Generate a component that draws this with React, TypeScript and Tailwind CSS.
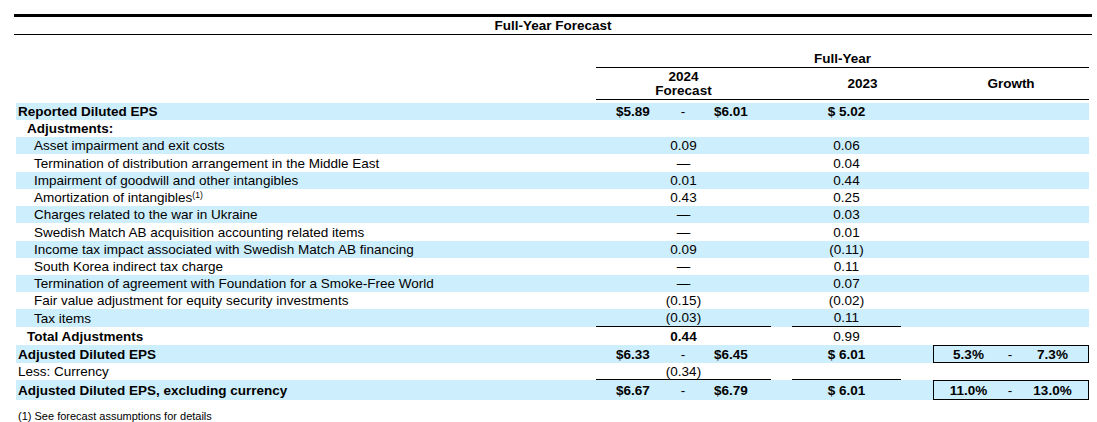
type Row = {
  label: string;
  sup?: string;
  pad: string;
  h: string;
  bold?: boolean;
  blue?: boolean;
  lo?: string;
  hi?: string;
  fc?: string;
  fcBold?: boolean;
  prior?: string;
  priorBold?: boolean;
  rule?: boolean;
  growth?: [string, string];
};

const rows: Row[] = [
  { label: 'Reported Diluted EPS', pad: 'pl-[2px]', h: 'h-[17px]', bold: true, blue: true, lo: '$5.89', hi: '$6.01', prior: '$ 5.02', priorBold: true },
  { label: 'Adjustments:', pad: 'pl-[11px]', h: 'h-[17px]', bold: true },
  { label: 'Asset impairment and exit costs', pad: 'pl-[18px]', h: 'h-[17px]', blue: true, fc: '0.09', prior: '0.06' },
  { label: 'Termination of distribution arrangement in the Middle East', pad: 'pl-[18px]', h: 'h-[18px]', fc: '—', prior: '0.04' },
  { label: 'Impairment of goodwill and other intangibles', pad: 'pl-[18px]', h: 'h-[17px]', blue: true, fc: '0.01', prior: '0.44' },
  { label: 'Amortization of intangibles', sup: '(1)', pad: 'pl-[18px]', h: 'h-[17px]', fc: '0.43', prior: '0.25' },
  { label: 'Charges related to the war in Ukraine', pad: 'pl-[18px]', h: 'h-[17px]', blue: true, fc: '—', prior: '0.03' },
  { label: 'Swedish Match AB acquisition accounting related items', pad: 'pl-[18px]', h: 'h-[18px]', fc: '—', prior: '0.01' },
  { label: 'Income tax impact associated with Swedish Match AB financing', pad: 'pl-[18px]', h: 'h-[17px]', blue: true, fc: '0.09', prior: '(0.11)' },
  { label: 'South Korea indirect tax charge', pad: 'pl-[18px]', h: 'h-[17px]', fc: '—', prior: '0.11' },
  { label: 'Termination of agreement with Foundation for a Smoke-Free World', pad: 'pl-[18px]', h: 'h-[17px]', blue: true, fc: '—', prior: '0.07' },
  { label: 'Fair value adjustment for equity security investments', pad: 'pl-[18px]', h: 'h-[17px]', fc: '(0.15)', prior: '(0.02)' },
  { label: 'Tax items', pad: 'pl-[18px]', h: 'h-[18px]', blue: true, fc: '(0.03)', prior: '0.11', rule: true },
  { label: 'Total Adjustments', pad: 'pl-[11px]', h: 'h-[18px]', bold: true, fc: '0.44', fcBold: true, prior: '0.99' },
  { label: 'Adjusted Diluted EPS', pad: 'pl-[2px]', h: 'h-[18px]', bold: true, blue: true, lo: '$6.33', hi: '$6.45', prior: '$ 6.01', priorBold: true, growth: ['5.3%', '7.3%'] },
  { label: 'Less: Currency', pad: 'pl-[2px]', h: 'h-[17px]', fc: '(0.34)', rule: true },
  { label: 'Adjusted Diluted EPS, excluding currency', pad: 'pl-[2px]', h: 'h-[20px]', bold: true, blue: true, lo: '$6.67', hi: '$6.79', prior: '$ 6.01', priorBold: true, growth: ['11.0%', '13.0%'] },
];

function ForecastCell({ r }: { r: Row }) {
  if (r.lo) {
    return (
      <>
        <div className="w-[74px] text-center font-bold">{r.lo}</div>
        <div className="w-[26px] text-center">-</div>
        <div className="w-[70px] text-center font-bold">{r.hi}</div>
      </>
    );
  }
  return <div className={`w-full text-center ${r.fcBold ? 'font-bold' : ''}`}>{r.fc}</div>;
}

export default function App() {
  return (
    <div className="w-[1097px] h-[422px] bg-white pt-[14px] font-['Liberation_Sans',Arial,sans-serif] text-[13.5px] leading-[15px] text-black">
      <div className="ml-[14px] w-[1078px] h-[21px] border-t-[3px] border-b border-black flex items-center justify-center font-bold">
        Full-Year Forecast
      </div>

      <div className="ml-[16px] flex">
        <div className="w-[580px]" />
        <div className="w-[493px]">
          <div className="h-[33px] border-b border-black flex items-end justify-center pb-[1px] font-bold">
            Full-Year
          </div>
          <div className="h-[32px] border-b border-black flex items-center leading-[14px] font-bold">
            <div className="w-[175px] text-center">
              2024
              <br />
              Forecast
            </div>
            <div className="w-[162px] pl-[21px] text-center">2023</div>
            <div className="flex-1 text-center">Growth</div>
          </div>
        </div>
      </div>

      <div className="h-[3px]" />

      {rows.map((r) => (
        <div
          key={r.label}
          className={`ml-[16px] w-[1073px] flex items-center ${r.h} ${r.blue ? 'bg-[#cdeefc]' : ''}`}
        >
          <div className={`w-[580px] whitespace-nowrap ${r.pad} ${r.bold ? 'font-bold' : ''}`}>
            {r.label}
            {r.sup && <sup className="text-[8.5px]">{r.sup}</sup>}
          </div>
          <div className={`w-[175px] h-full flex items-center ${r.rule ? 'border-b border-black' : ''}`}>
            <ForecastCell r={r} />
          </div>
          <div className="w-[21px]" />
          <div
            className={`w-[109px] h-full flex items-center justify-center ${r.rule ? 'border-b border-black' : ''} ${r.priorBold ? 'font-bold' : ''}`}
          >
            {r.prior}
          </div>
          <div className="w-[32px]" />
          {r.growth ? (
            <div className="w-[156px] h-full border border-black flex items-center">
              <div className="w-[69px] text-center font-bold">{r.growth[0]}</div>
              <div className="w-[14px] text-center">-</div>
              <div className="flex-1 text-center font-bold">{r.growth[1]}</div>
            </div>
          ) : (
            <div className="w-[156px]" />
          )}
        </div>
      ))}

      <div className="mt-[10px] ml-[18px] text-[11px] leading-[13px]">
        (1) See forecast assumptions for details
      </div>
    </div>
  );
}
